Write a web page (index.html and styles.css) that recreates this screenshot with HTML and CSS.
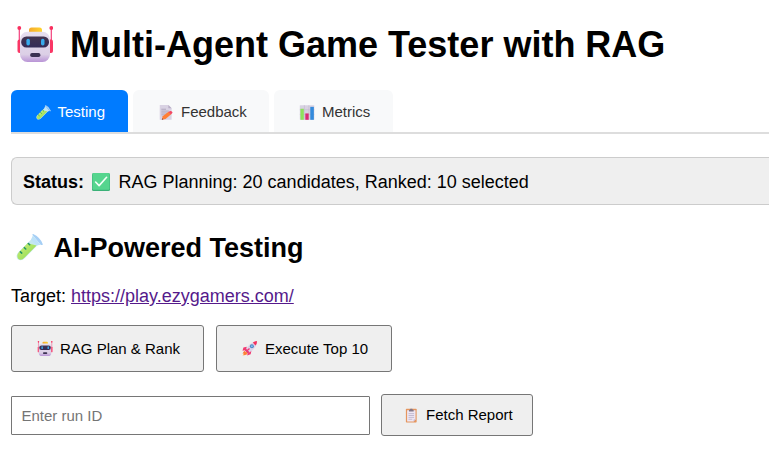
FILE: index.html
```
<!DOCTYPE html>
<html lang="en">
<head>
<meta charset="utf-8">
<title>Multi-Agent Game Tester with RAG</title>
<link rel="stylesheet" href="styles.css">
</head>
<body>
<svg class="sprite" aria-hidden="true">
  <defs>
    <linearGradient id="head" x1="0" y1="0" x2="0" y2="1"><stop offset="0" stop-color="#e6dff0"/><stop offset=".75" stop-color="#dccfe6"/><stop offset="1" stop-color="#b994d6"/></linearGradient>
    <linearGradient id="cap"><stop offset="0" stop-color="#f5a82c"/><stop offset="1" stop-color="#ffd42e"/></linearGradient>
    <linearGradient id="visor" x1="0" y1="0" x2="0" y2="1"><stop offset="0" stop-color="#42344f"/><stop offset="1" stop-color="#342c58"/></linearGradient>
    <linearGradient id="liquid" x1="0" y1="0" x2="1" y2="1"><stop offset="0" stop-color="#d0f07c"/><stop offset="1" stop-color="#86d84c"/></linearGradient>
  </defs>
  <symbol id="robot" viewBox="0 0 36 36">
    <path d="M2.3 2v14M34.3 2v14" stroke="#f2407c" stroke-width="1.2"/>
    <circle cx="2.3" cy="2" r="1.9" fill="#f9305f"/><circle cx="34.3" cy="2" r="1.9" fill="#f9305f"/>
    <rect x=".5" y="13.5" width="5" height="13.5" rx="2" fill="#fa3765"/><rect x="31" y="13.5" width="5" height="13.5" rx="2" fill="#fa3765"/>
    <rect x="12" y="1.5" width="13" height="7" rx="2.5" fill="url(#cap)"/>
    <rect x="3" y="5.7" width="30" height="30.3" rx="7.5" fill="url(#head)"/>
    <rect x="4.2" y="10.5" width="27.8" height="11" rx="5.2" fill="url(#visor)"/>
    <rect x="9.4" y="12.8" width="3.5" height="6.6" rx="1.7" fill="#38abed"/><rect x="24" y="12.8" width="3.5" height="6.6" rx="1.7" fill="#38abed"/>
    <rect x="13.2" y="27" width="10.2" height="4" rx="1.8" fill="#3b3152"/>
  </symbol>
  <symbol id="tube" viewBox="0 0 28 28">
    <path d="M16.500 5 22.500 11.500 9.500 24.600Q5.500 29 1.800 26.200-.8 22.500 2.500 19Z" fill="#c4e8ee"/>
    <path d="M12 9.500 21.300 12 9 24.300Q5.400 28 2.300 25.700.2 22.500 3 19Z" fill="url(#liquid)"/>
    <path d="M17.500 1.500Q16 .2 17.800.1 25 3.500 27.800 10.500 27.500 12 25.500 11.200Z" fill="#a6cff5"/>
    <path d="M17.500 1.500 25.500 11.200 21.500 12 15.500 6Z" fill="#bde2f8"/>
    <path d="m12.800 9.900 1.400 1.300m-5.500 3 1.400 1.300m-5.500 3 1.400 1.300" stroke="#209466" stroke-width="1.600" stroke-linecap="round"/>
  </symbol>
  <symbol id="memo" viewBox="0 0 16 16">
    <path d="M1.300 0h9.200L14 3.500V15.800H1.300Z" fill="#d9d2e3"/><path d="M10.500 0v3.500H14Z" fill="#b8adc5"/>
    <path d="M3 4.500h5M3 6.500h8M3 8.500h6M3 10.500h4" stroke="#a49bb1" stroke-width=".8"/>
    <path d="m4.500 12 6-4.700 3 2.500-6 5-4 1Z" fill="#ff7e35"/><path d="m10.500 7.500 2-1.200q2.200-.2 2.500 2L13.200 10Z" fill="#f34763"/>
    <path d="m3.500 15.800.5-1.800 1.200 1.300Z" fill="#65404b"/>
  </symbol>
  <symbol id="chart" viewBox="0 0 16 16">
    <rect x=".3" y=".2" width="15.500" height="15.600" rx=".6" fill="#d8d2e2"/>
    <path d="M5.200.2v15.600M10 .2v15.600M.3 5h15.500M.3 10h15.500" stroke="#bdb5c9" stroke-width=".5"/>
    <rect x="1" y="4" width="3.600" height="11.800" fill="#8de25c"/><rect x="6.200" y="9" width="3.600" height="6.800" fill="#d92c75"/><rect x="11.500" y="2" width="3.800" height="13.800" fill="#348bdc"/>
  </symbol>
  <symbol id="check" viewBox="0 0 18 18">
    <rect width="18" height="18" rx="1.500" fill="#3bb178"/><rect x=".5" width="17" height="16.700" rx="1.200" fill="#55d58e"/>
    <path d="m3.600 9 3.500 3.600 7.500-8.300" fill="none" stroke="#f4fff8" stroke-width="1.600" stroke-linecap="round" stroke-linejoin="round"/>
  </symbol>
  <symbol id="rocket" viewBox="0 0 16 16">
    <path d="M4.500 10 0 15.500l5-1.800Z" fill="#ffb02e"/><path d="m2 10.500-2 2.800 2 .2-1 2 4-1.500Z" fill="#ff7a38"/>
    <path d="M4.500 6 1 7 0 10.500l4-1ZM9.500 10.500 8.700 14 5 15.500l.800-4Z" fill="#f23a70"/>
    <path d="M3 10.500Q6 2.500 14.500.5q1 0 1 1Q14 9 6 13Z" fill="#ddd3e9"/>
    <path d="M11 1.500Q15.500-.8 15.500.5q0 2.500-1.700 4.300Z" fill="#f5315f"/>
    <path d="m2.500 10 1-2 4.200 4-2.200 1.300Z" fill="#e83b76"/><path d="M4.500 10.700 7.500 8" stroke="#ef3978" stroke-width="1.400"/>
    <circle cx="10" cy="5.600" r="2.100" fill="#4c86c4"/><circle cx="10" cy="5.600" r="1.100" fill="#7fc0f0"/>
  </symbol>
  <symbol id="clipboard" viewBox="0 0 16 16">
    <rect x="2" y=".8" width="11.500" height="14.700" rx=".8" fill="#e5965f"/><path d="M3.300 2.500h9v9.800l-2 2h-7Z" fill="#eee7f4"/>
    <path d="M10.300 14.300v-2h2Z" fill="#b9a9c7"/><path d="M5.300 3.800V2q1.200 0 1.500-1.300h2Q9 2 10.300 2v1.800Z" fill="#837889"/>
    <path d="M4.800 6h6M4.800 8h6M4.800 10h6M4.800 12h4" stroke="#b7acc5" stroke-width=".8"/>
  </symbol>
</svg>
<main>
  <h1><svg class="icon-title"><use href="#robot"/></svg><span>Multi-Agent Game Tester with RAG</span></h1>
  <nav class="tabs">
    <button class="tab active"><svg class="icon"><use href="#tube"/></svg><span>Testing</span></button>
    <button class="tab feedback"><svg class="icon"><use href="#memo"/></svg><span>Feedback</span></button>
    <button class="tab metrics"><svg class="icon"><use href="#chart"/></svg><span>Metrics</span></button>
  </nav>
  <div class="status"><strong>Status:</strong><svg class="icon-status"><use href="#check"/></svg><span>RAG Planning: 20 candidates, Ranked: 10 selected</span></div>
  <h2><svg class="icon-heading"><use href="#tube"/></svg><span>AI-Powered Testing</span></h2>
  <p>Target: <a href="https://play.ezygamers.com/">https://play.ezygamers.com/</a></p>
  <div class="actions">
    <button class="action plan"><svg class="icon"><use href="#robot"/></svg><span>RAG Plan &amp; Rank</span></button>
    <button class="action execute"><svg class="icon"><use href="#rocket"/></svg><span>Execute Top 10</span></button>
  </div>
  <div class="report">
    <input type="text" placeholder="Enter run ID">
    <button class="action fetch"><svg class="icon"><use href="#clipboard"/></svg><span>Fetch Report</span></button>
  </div>
</main>
</body>
</html>
```
FILE: styles.css
```
* { box-sizing: border-box; }
body {
  margin: 0;
  background: #fff;
  color: #000;
  font: 18px/20px "Liberation Sans", Arial, sans-serif;
}
.sprite { position: absolute; width: 0; height: 0; }
main { padding: 23px 0 0 11px; }
svg { flex: none; }
span { white-space: nowrap; }
h1, h2, p { margin: 0; }
h1 {
  display: flex;
  align-items: center;
  height: 42px;
  padding-left: 6px;
  font-size: 36px;
  line-height: 42px;
}
h1 span, h2 span { padding-top: 2px; }
.icon-title { width: 36px; height: 36px; margin-right: 17px; }
.tabs {
  display: flex;
  gap: 5px;
  height: 69px;
  padding-top: 25px;
  border-bottom: 2px solid #ddd;
}
button { font: 15px/18px "Liberation Sans", Arial, sans-serif; color: #000; }
.tab, .action { display: flex; align-items: center; padding: 0 0 0 25px; }
.tab {
  width: 117px;
  height: 42px;
  border: 0;
  border-radius: 6px 6px 0 0;
  background: #f8f9fa;
  color: #333;
  padding-top: 2px;
}
.tab.active { padding-left: 24.5px; background: #007bff; color: #fff; }
.feedback { width: 136px; }
.metrics { width: 119px; }
.icon { width: 15px; height: 15px; margin-right: 7px; }
.feedback .icon, .metrics .icon, .plan .icon, .execute .icon { width: 16px; }
.status {
  display: flex;
  align-items: center;
  height: 48px;
  margin-top: 23px;
  padding: 2px 11px 0;
  border: 1px solid #ccc;
  border-right: 0;
  border-radius: 6px 0 0 6px;
  background: #efefef;
}
.icon-status { width: 18px; height: 18px; margin: 0 8.5px 0 8px; }
h2 {
  display: flex;
  align-items: center;
  height: 32px;
  margin-top: 26px;
  padding-left: 4.500px;
  font-size: 27px;
  line-height: 32px;
}
.icon-heading { width: 27px; height: 27px; margin-right: 11px; }
p { margin-top: 23px; }
a { color: #551a8b; }
.actions { display: flex; gap: 12px; margin-top: 19px; }
.action {
  height: 47px;
  border: 1px solid #767676;
  border-radius: 3px;
  background: #efefef;
}
.plan { width: 193px; }
.execute { width: 176px; }
.report { display: flex; align-items: center; gap: 11px; height: 42px; margin-top: 22px; }
.report input {
  width: 359px;
  height: 39px;
  padding: 0 9.500px;
  border: 1px solid #767676;
  border-radius: 1px;
  font: 15px/18px "Liberation Sans", Arial, sans-serif;
}
input::placeholder { color: #757575; }
.fetch { width: 152px; height: 42px; padding-left: 22px; }
```
